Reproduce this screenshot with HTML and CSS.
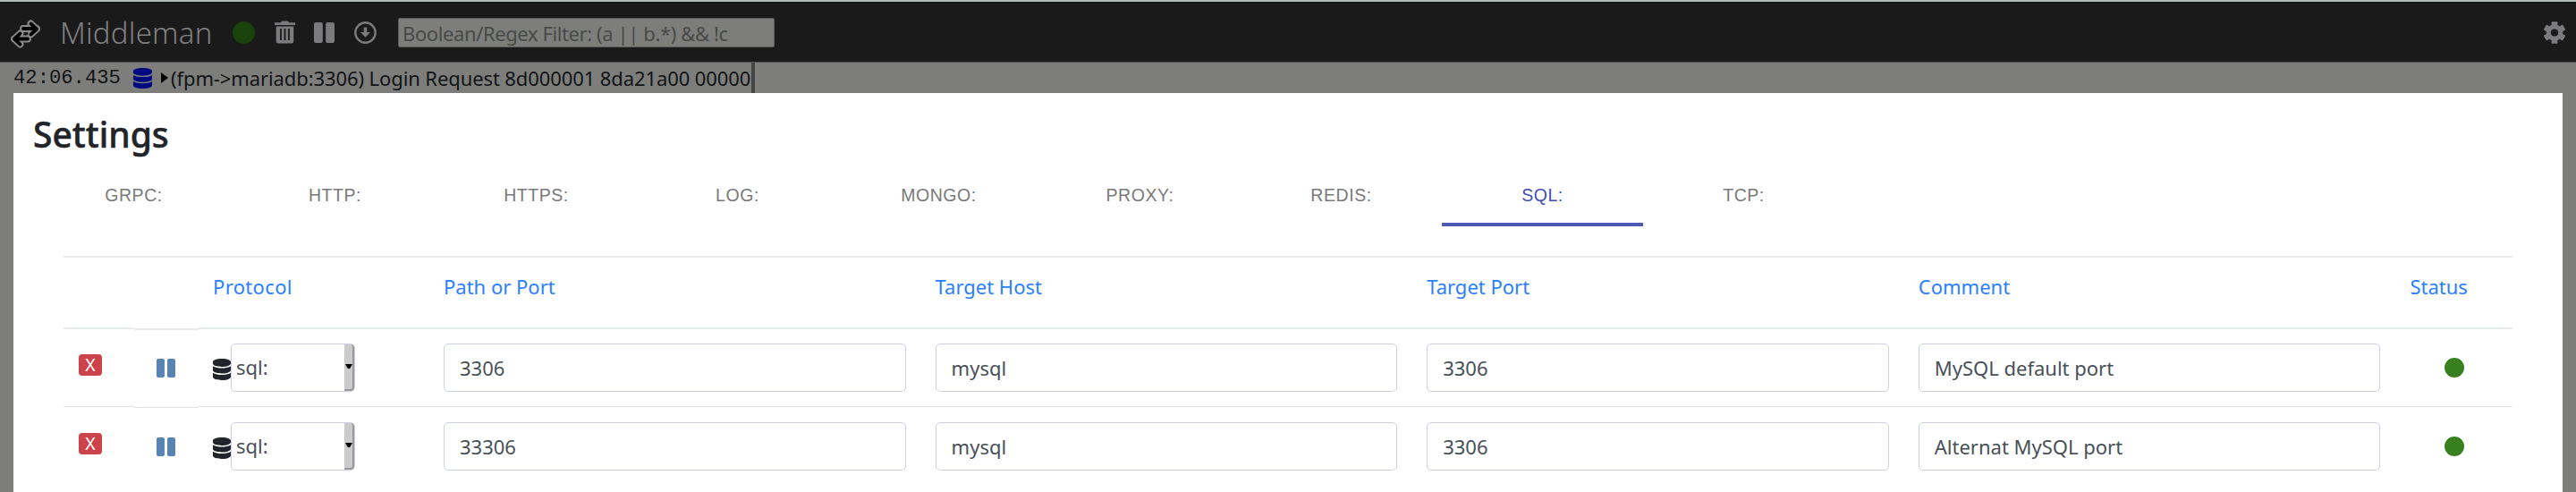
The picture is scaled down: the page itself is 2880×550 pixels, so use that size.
FILE: index.html
```
<!DOCTYPE html>
<html lang="en">
<head>
<meta charset="utf-8">
<title>Middleman</title>
<link rel="stylesheet" href="styles.css">
</head>
<body>
<svg class="defs" width="0" height="0">
  <symbol id="db" viewBox="0 0 448 512" preserveAspectRatio="none"><path d="M448 73.143v45.714C448 159.143 347.667 192 224 192S0 159.143 0 118.857V73.143C0 32.857 100.333 0 224 0s224 32.857 224 73.143zM448 176v102.857C448 319.143 347.667 352 224 352S0 319.143 0 278.857V176c48.125 33.143 136.208 48.572 224 48.572S399.874 209.143 448 176zm0 160v102.857C448 479.143 347.667 512 224 512S0 479.143 0 438.857V336c48.125 33.143 136.208 48.572 224 48.572S399.874 369.143 448 336z"/></symbol>
  <symbol id="pause" viewBox="0 0 22 22" preserveAspectRatio="none"><rect width="9.4" height="22" rx="2"/><rect x="12.6" width="9.4" height="22" rx="2"/></symbol>
</svg>
<header class="bar">
  <svg class="logo" viewBox="0 0 33 32"><g fill="none" stroke-linejoin="round" stroke-linecap="round"><path d="M14 10H29M22.500 4.500L29 10.500L22.500 16.500M19 21.500H4M10.500 15.500L4 21.500L10.500 27.500" stroke="#8a8a8a" stroke-width="7.800"/><path d="M14 10H28.500M22.500 4.500L29 10.500L22.500 16.500M19 21.500H4.500M10.500 15.500L4 21.500L10.500 27.500" stroke="#000" stroke-width="3.800"/></g><path d="M14.500 16H19.500" stroke="#1a1a1a" stroke-width="1.600"/></svg>
  <span class="brand">Middleman</span>
  <span class="live"></span>
  <svg class="trash" viewBox="0 0 23 26"><path fill="#7b7b7d" d="M0 2.200H7L8 .500H15L16 2.200H23V5H0zM1.700 6.500H21.300V23Q21.300 25.500 19 25.500H4Q1.700 25.500 1.700 23z"/><path d="M7 9V22M11.500 9V22M16 9V22" stroke="#1a1a1a" stroke-width="1.800"/></svg>
  <svg class="hold"><use href="#pause"/></svg>
  <svg class="down" viewBox="0 0 25 25"><circle cx="12.500" cy="12.500" r="11.200" fill="none" stroke="#7b7b7b" stroke-width="2.400"/><path d="M10.700 6.500h3.600v5.500h3.700l-5.500 5.700L7 12h3.700z" fill="#7b7b7b"/></svg>
  <div class="filter">Boolean/Regex Filter: (a || b.*) &amp;&amp; !c</div>
  <svg class="gear" viewBox="0 0 24 25"><g fill="#7b7b7d" transform="translate(12 12.500)"><rect x="-3.400" y="-12.300" width="6.800" height="24.600" rx="1"/><rect x="-3.400" y="-12.300" width="6.800" height="24.600" rx="1" transform="rotate(60)"/><rect x="-3.400" y="-12.300" width="6.800" height="24.600" rx="1" transform="rotate(120)"/><circle r="9.300"/><circle r="4.100" fill="#1a1a1a"/></g></svg>
</header>
<div class="log">
  <span class="time">42:06.435</span>
  <svg class="logdb"><use href="#db"/></svg>
  <svg class="caret" viewBox="0 0 8 12"><path d="M0 0L8 6L0 12z"/></svg>
  <span class="entry">(fpm-&gt;mariadb:3306) Login Request 8d000001 8da21a00 00000</span>
</div>
<main class="modal">
  <h1>Settings</h1>
  <nav class="tabs">
    <span>GRPC:</span><span>HTTP:</span><span>HTTPS:</span><span>LOG:</span><span>MONGO:</span><span>PROXY:</span><span>REDIS:</span><span class="active">SQL:</span><span>TCP:</span>
  </nav>
  <section class="table">
    <div class="row head">
      <span></span><span></span><span class="proto">Protocol</span><span>Path or Port</span><span>Target Host</span><span>Target Port</span><span>Comment</span><span class="status">Status</span>
    </div>
    <div class="row">
      <div class="cell del"><span class="x">X</span></div>
      <div class="cell hold-cell"><svg class="hold"><use href="#pause"/></svg></div>
      <div class="cell proto"><svg class="db"><use href="#db"/></svg><div class="select"><span>sql:</span><i><svg viewBox="0 0 8 6"><path d="M0 0H8L5.500 4.500Q4 6 2.500 4.500z"/></svg></i></div></div>
      <div class="cell"><div class="input">3306</div></div>
      <div class="cell"><div class="input">mysql</div></div>
      <div class="cell"><div class="input">3306</div></div>
      <div class="cell"><div class="input">MySQL default port</div></div>
      <div class="cell state"><span class="dot"></span></div>
    </div>
    <div class="row second">
      <div class="cell del"><span class="x">X</span></div>
      <div class="cell hold-cell"><svg class="hold"><use href="#pause"/></svg></div>
      <div class="cell proto"><svg class="db"><use href="#db"/></svg><div class="select"><span>sql:</span><i><svg viewBox="0 0 8 6"><path d="M0 0H8L5.500 4.500Q4 6 2.500 4.500z"/></svg></i></div></div>
      <div class="cell"><div class="input">33306</div></div>
      <div class="cell"><div class="input">mysql</div></div>
      <div class="cell"><div class="input">3306</div></div>
      <div class="cell"><div class="input">Alternat MySQL port</div></div>
      <div class="cell state"><span class="dot"></span></div>
    </div>
  </section>
</main>
</body>
</html>
```
FILE: styles.css
```
* { box-sizing: border-box; }
body {
  margin: 0;
  height: 550px;
  overflow: hidden;
  background: #7d7e7b;
  color: #212529;
  font: 22px/33px "Noto Sans", sans-serif;
  white-space: nowrap;
}
svg { display: block; flex: none; }
.defs { position: absolute; }

.bar {
  display: flex;
  align-items: center;
  height: 70px;
  padding: 1px 12px 0;
  background: #1a1a1a;
  border-top: 2px solid #b5b8b8;
  border-bottom: 1px solid #555;
}
.logo { width: 33px; height: 32px; margin-top: 3px; }
.brand {
  width: 171px;
  margin-left: 22px;
  color: #7f7f7f;
  font-size: 33px;
  font-weight: 300;
  letter-spacing: 0.2px;
}
.live { width: 25px; height: 25px; margin-left: 22px; border-radius: 50%; background: #1a420b; }
.trash { width: 23px; height: 26px; margin-left: 22px; }
.bar .hold { width: 23px; height: 23px; margin-left: 21px; fill: #7b7b7d; }
.down { width: 25px; height: 25px; margin-left: 22px; }
.filter {
  width: 421px;
  height: 33px;
  margin-left: 24px;
  padding-left: 4px;
  border: 1px solid #5c5c5c;
  border-radius: 2px;
  background: #7d7e7b;
  color: #484a48;
  line-height: 32px;
  letter-spacing: -0.4px;
}
.gear { width: 24px; height: 25px; margin-left: auto; }

.log {
  display: flex;
  align-items: center;
  width: 844px;
  height: 34px;
  padding-left: 15px;
  border-right: 4px solid #454545;
  color: #111315;
  overflow: hidden;
}
.time { width: 120px; font-family: "Liberation Mono", monospace; font-size: 22.2px; }
.logdb { width: 21px; height: 23px; margin-left: 14px; fill: #000a80; }
.caret { width: 8px; height: 12px; margin-left: 10px; }
.entry { margin-left: 3px; letter-spacing: -0.1px; }

.modal {
  height: 446px;
  margin: 0 15px;
  padding: 21px 0 0 22px;
  background: #fff;
}
h1 {
  margin: 0 0 12px;
  color: #212529;
  font-size: 39px;
  font-weight: 500;
  line-height: 49px;
  -webkit-text-stroke: 0.5px #212529;
}
.tabs { display: flex; height: 67px; }
.tabs span {
  width: 225px;
  text-align: center;
  color: #7a7a7a;
  font: 19.5px/65px "Liberation Sans", sans-serif;
  letter-spacing: 0.56px;
}
.tabs .active { border-bottom: 4px solid #4c5ab5; color: #3f51b5; }

.table { width: 2738px; margin: 33px 0 0 34px; }
.row {
  display: grid;
  grid-template-columns: 79px 72px 258px 549.6px 549.6px 549.6px 549.6px 1fr;
  height: 88px;
}
.head { height: 80px; border-top: 2px solid #e9eaeb; }
.head span { padding: 16px 0 0 16px; color: #2a80ff; }
.head .proto { letter-spacing: 0.35px; }
.cell { padding: 16px 17px 0 16px; border-top: 2px solid #e7eaec; }
.cell.hold-cell { margin-top: 1px; }
.second .cell { border-top: 1px solid #dee3e5; padding-top: 17px; }
.input {
  height: 54px;
  padding-left: 17px;
  border: 1px solid #ced2e0;
  border-radius: 5px;
  color: #495057;
  line-height: 53px;
}
.cell.del { padding-left: 17px; }
.cell.proto { display: flex; padding-right: 0; }
.db { width: 20px; height: 24px; margin-top: 17px; fill: #212529; }
.select {
  display: flex;
  justify-content: space-between;
  width: 139px;
  height: 54px;
  padding-left: 5px;
  border: 1px solid #ced2e0;
  border-radius: 5px;
  color: #495057;
  line-height: 51px;
}
.select i {
  display: grid;
  place-items: center;
  width: 11px;
  height: 52px;
  background: #cbcbcb;
  border: solid #999;
  border-width: 0 2px 2px 0;
  border-radius: 0 4px 4px 0;
}
.select svg { width: 8px; height: 6px; }
.x {
  display: block;
  width: 26px;
  height: 24px;
  margin-top: 12px;
  border-radius: 4px;
  background: #ce4249;
  color: #fff;
  font-size: 19.5px;
  line-height: 24px;
  text-align: center;
}
.cell.hold-cell { padding-left: 25px; }
.hold-cell .hold { width: 21px; height: 21px; margin-top: 16px; fill: #5784b5; }
.cell.state { padding-left: 55px; }
.dot { display: block; width: 22px; height: 22px; margin-top: 16px; border-radius: 50%; background: #378020; }
```
